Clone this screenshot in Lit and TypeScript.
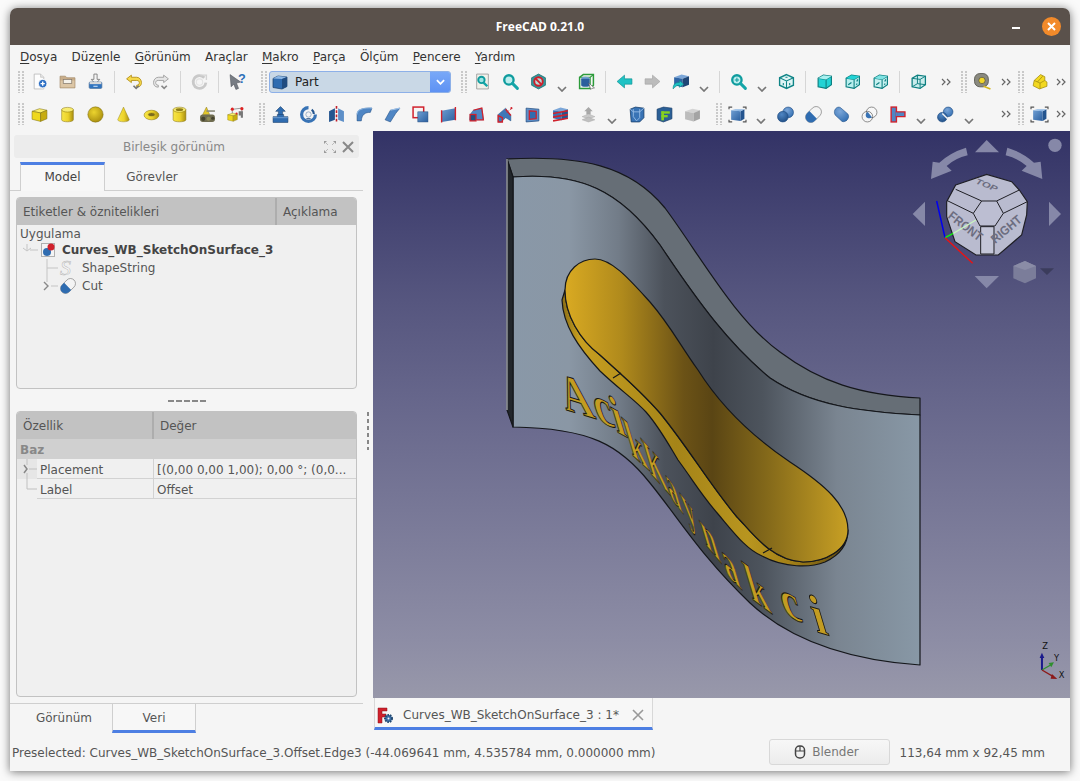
import { LitElement, html, css, svg } from 'lit';
import { customElement } from 'lit/decorators.js';

const PLUS = svg`<circle cx="11" cy="10" r="4" fill="#2d6fc4" stroke="#fff" stroke-width=".8"/><path d="M9 10h4M11 8v4" stroke="#fff" stroke-width="1.3"/>`;

const cube = (t: string, f: string, s: string, e = 'none') => svg`
  <path d="M1 5 8 2.5 15 4 9 6.5Z" fill=${t} stroke=${e} stroke-width=".7"/>
  <path d="M1 5 9 6.5V14.5L1 12.5Z" fill=${f} stroke=${e} stroke-width=".7"/>
  <path d="M9 6.5 15 4V12L9 14.5Z" fill=${s} stroke=${e} stroke-width=".7"/>`;

const YELLOW = svg`
  <path d="M1 5 8 2.5 15 4 9 6.5Z" fill="#fbef6a" stroke="#7d6d10" stroke-width=".5"/>
  <path d="M1 5 9 6.5V14.5L1 12.5Z" fill="#efd81c" stroke="#7d6d10" stroke-width=".5"/>
  <path d="M9 6.5 15 4V12L9 14.5Z" fill="#c7ac10" stroke="#7d6d10" stroke-width=".5"/>`;

const teal = (front: string, top: string, marks = false) => svg`
  <path d="M2 5 7 2 14.5 3 14.5 11 9.5 14.5 2 13Z" fill=${front} stroke="#0d7f80" stroke-width="1.1"/>
  <path d="M2 5 9.5 6 14.5 3M9.5 6V14.5" fill="none" stroke="#0d7f80" stroke-width="1"/>
  <path d="M2 5 7 2 14.5 3 9.5 6Z" fill=${top}/>
  ${marks ? svg`<path d="M4 11 7 9M12 8l1-2M11.5 11l1-1" stroke="#0d7f80" stroke-width="1.1"/>` : ''}`;

const lens = svg`
  <circle cx="6.5" cy="6.5" r="4.4" fill="#bdeeee" stroke="#0f9c9e" stroke-width="2.2"/>
  <path d="M9.8 9.8 14.5 14.5" stroke="#14a5a8" stroke-width="2.8" stroke-linecap="round"/>`;

const ball = (x: number, y: number, r: number, fill = 'url(#gball)', e = '#1f4d85') =>
  svg`<circle cx=${x} cy=${y} r=${r} fill=${fill} stroke=${e} stroke-width=".6"/>`;

const ICONS: Record<string, unknown> = {
  new: svg`<path d="M3 1h6l3 3v11H3Z" fill="#fdfdfd" stroke="#bbb" stroke-width=".8"/><path d="M9 1v3h3" fill="#e4e4e4" stroke="#bbb" stroke-width=".6"/>${PLUS}`,
  open: svg`<path d="M1 3h5l1.5 1.5H15V14H1Z" fill="#c8ad8a" stroke="#a68d6c" stroke-width=".7"/><path d="M1.5 7H14.5V13.5H1.5Z" fill="#dcc6a6"/><rect x="4" y="6" width="8" height="4" fill="#f4f1ea" stroke="#84796a" stroke-width=".7"/>`,
  save: svg`<path d="M6.5 1h3v5h2.5L8 10.5 4 6h2.5Z" fill="#f4f4f4" stroke="#777" stroke-width=".8"/><rect x="2" y="8.5" width="12" height="6" rx="1" fill="#2f74c0" stroke="#4a6d95" stroke-width=".6"/><rect x="2.5" y="8.5" width="11" height="2" fill="#d9d9d9"/><path d="M6 12.5h4" stroke="#cfe2f7" stroke-width="1"/>`,
  undo: svg`<path d="M6 2 1.5 5.5 6 9V7h5c1.8 0 2.5 1 2.5 2S13 11.5 11 11.5v1.8c3.500 0 4.500-2.300 4.500-4.300S14 4 11 4H6Z" fill="#f6d94a" stroke="#b18b10" stroke-width=".8"/><path d="M8 12l2.500 2.500L13 12" fill="none" stroke="#777" stroke-width="1.600"/>`,
  redo: svg`<path d="M10 2 14.500 5.500 10 9V7H5c-1.800 0-2.500 1-2.500 2S3 11.500 5 11.500v1.800C1.500 13.300.5 11 .5 9S2 4 5 4h5Z" fill="#e6e6e6" stroke="#9b9b9b" stroke-width=".8"/><path d="M8 12l2.500 2.500L13 12" fill="none" stroke="#888" stroke-width="1.600"/>`,
  refresh: svg`<path d="M12.500 4.500A6 6 0 1 0 14 9" fill="none" stroke="#c9c9c9" stroke-width="2.600"/><path d="M9 2h5.500v4.500" fill="none" stroke="#d4d4d4" stroke-width="1.300"/><circle cx="8" cy="8.500" r="3" fill="none" stroke="#e3e3e3"/>`,
  whats: svg`<path d="M1 1.500 11 8.500 7 9.500 9 14.500 6.500 15.500 4.500 10.500 2 13Z" fill="#777c84" stroke="#4c5056" stroke-width=".5"/><text x="8.500" y="9" font-family="Liberation Sans" font-weight="700" font-size="12" fill="#2c6fb8">?</text>`,
  part: svg`<path d="M1 4.500 6 2 15 3V12.500L10 15 1 13.500Z" fill="#2f6cb0" stroke="#183c66" stroke-width=".7"/><path d="M1 4.500 6 2 15 3 10 5Z" fill="#8db7e4"/><path d="M10 5 15 3V12.500L10 15Z" fill="#204c80"/>`,
  fit: svg`<path d="M2.500 1h11v14h-11Z" fill="#f1f1ea" stroke="#999" stroke-width=".8"/><circle cx="7" cy="6.500" r="3" fill="#9fe4e3" stroke="#0f9c9e" stroke-width="1.800"/><path d="M9 9l3.500 3.500" stroke="#14a5a8" stroke-width="2.200"/>`,
  zoomsel: lens,
  nodraw: svg`<path d="M8 1 14.500 4.500V11.500L8 15 1.500 11.500V4.500Z" fill="#34989c" stroke="#14686b" stroke-width=".7"/><circle cx="8" cy="8" r="4" fill="#b4d8d6" stroke="#cf1f2b" stroke-width="1.800"/><path d="M5.300 5.300 10.700 10.700" stroke="#cf1f2b" stroke-width="1.800"/>`,
  boxsel: svg`<path d="M1.500 4 5 1.500H14.500V11.500L11.500 14.500H1.500Z" fill="none" stroke="#2c9b3a" stroke-width="1.400"/><path d="M1.500 4H11.500V14.500M11.500 4 14.500 1.500" fill="none" stroke="#2c9b3a" stroke-width="1"/><ellipse cx="7" cy="5.500" rx="4" ry="2" fill="#6f9fd3"/><path d="M3 5.500V11.500C3 13.500 11 13.500 11 11.500V5.500" fill="#2c5f9d"/><path d="M10 9.500 15.500 14 13 14.500 12 15.500Z" fill="#fff" stroke="#555" stroke-width=".6"/>`,
  back: svg`<path d="M1 8 8 2V5.500H15V10.500H8V14Z" fill="#1ec2c4" stroke="#0f8f90" stroke-width=".6"/>`,
  fwd: svg`<path d="M15 8 8 2V5.500H1V10.500H8V14Z" fill="#bcbcbc" stroke="#a4a4a4" stroke-width=".6"/>`,
  sync: svg`<g transform="translate(1 -1)">${cube('#7ba6d8', '#2f65a6', '#1f4676')}</g><path d="M1 15C1 10.500 3 9 7 9V7L11 10.500 7 13.500V11.500C4.500 11.500 3.500 12.500 1 15Z" fill="#1ec2c4" stroke="#0f7f80" stroke-width=".5"/>`,
  zoom: svg`${lens}<path d="M4.500 6.500h4M6.500 4.500v4" stroke="#0f9c9e" stroke-width="1"/>`,
  iso: svg`<path d="M8 1.500 14.500 4.500V11.500L8 14.500 1.500 11.500V4.500Z" fill="#dff5f5" stroke="#0f8486" stroke-width="1.300"/><path d="M1.500 4.500 8 7.500 14.500 4.500M8 7.500V14.500" fill="none" stroke="#0f8486"/><path d="M5 9.500v2M11 9.500v2M7 4h2" stroke="#0f8486" stroke-width="1"/>`,
  vfront: teal('#22d3d5', '#a9f0f0'),
  vtop: teal('#b8efee', '#22d3d5', true),
  vright: teal('#c5f1f0', '#7fe3e3', true),
  vwire: svg`<path d="M2 5 7 2 14.500 3V11L9.500 14.500 2 13Z" fill="#9fe3e3" fill-opacity=".5" stroke="#0d7f80" stroke-width="1.200"/><path d="M2 5 9.500 6 14.500 3M9.500 6V14.500M7 2V10L2 13M7 10 14.500 11" fill="none" stroke="#0d7f80" stroke-width=".9"/>`,
  measure: svg`<rect x=".5" y=".5" width="13" height="12.500" rx="5" fill="#8a8a80" stroke="#55554d" stroke-width=".8"/><circle cx="7.500" cy="7" r="3" fill="#f2d62a" stroke="#444" stroke-width=".6"/><path d="M9 12.500 15.500 15" stroke="#d6b81c" stroke-width="1.600"/>`,
  yshape: svg`<path d="M3 7 9 1.500 13 3.500V7L15 8.500V12.500L8 15 2 12Z" fill="#f2d820" stroke="#a08a10" stroke-width=".7"/><path d="M3 7 8.500 9.500V15M8.500 9.500 13 7M6 8.500 11 3" fill="none" stroke="#a08a10" stroke-width=".7"/>`,
  box: YELLOW,
  cyl: svg`<path d="M2.500 3.500V13C2.500 15.500 13.500 15.500 13.500 13V3.500Z" fill="url(#gyel)" stroke="#8a7610" stroke-width=".5"/><ellipse cx="8" cy="3.500" rx="5.500" ry="2.200" fill="#f8ec70" stroke="#8a7610" stroke-width=".5"/>`,
  sphere: svg`<circle cx="8" cy="8" r="7.200" fill="url(#gsph)" stroke="#7d6b10" stroke-width=".5"/>`,
  cone: svg`<path d="M8 1 13.500 13C13 15.500 3 15.500 2.500 13Z" fill="url(#gyel)" stroke="#8a7610" stroke-width=".4"/>`,
  torus: svg`<ellipse cx="8" cy="8.500" rx="7" ry="4.500" fill="url(#gyel)" stroke="#8a7610" stroke-width=".5"/><ellipse cx="8" cy="8" rx="3" ry="1.500" fill="#7a6a20" stroke="#8a7610" stroke-width=".4"/>`,
  tube: svg`<path d="M2 3.500V13C2 15.500 14 15.500 14 13V3.500Z" fill="url(#gyel)" stroke="#8a7610" stroke-width=".5"/><ellipse cx="8" cy="3.500" rx="6" ry="2.400" fill="#f8ec70" stroke="#8a7610" stroke-width=".5"/><ellipse cx="8" cy="3.500" rx="3.500" ry="1.300" fill="#8f7d18"/>`,
  shapes: svg`<path d="M3 9 7 1 10 8Z" fill="#e2c62a" stroke="#7d6b10" stroke-width=".4"/><rect x="7" y="4" width="8" height="1.500" fill="#8a8a7a"/><rect x="1" y="8" width="14" height="7" rx="2.500" fill="#6f6c50"/><circle cx="4" cy="12" r="2" fill="#45432e"/><circle cx="9" cy="12" r="2" fill="#8c8954"/><circle cx="13" cy="11.500" r="1.500" fill="#45432e"/>`,
  prims: svg`<g transform="translate(0 5) scale(.65)">${YELLOW}</g><path d="M6 3 14 2M5 4v3M14 3v5" stroke="#888" stroke-width=".8"/><circle cx="5" cy="3" r="1.500" fill="#d22"/><circle cx="14" cy="2.500" r="1.500" fill="#d22"/><path d="M11 5h4v6h-2v-2h-2Z" fill="#777"/><circle cx="9" cy="7" r="1" fill="#d22"/>`,
  extrude: svg`<path d="M8 .5 12.500 5H10V9H6V5H3.500Z" fill="#2f6cb0" stroke="#163b66" stroke-width=".5"/><path d="M1 10H5V8H11V10H15V15.500H1Z" fill="#2f6cb0" stroke="#163b66" stroke-width=".5"/><path d="M1 11H15" fill="none" stroke="#7ba6d8" stroke-width=".8"/>`,
  revolve: svg`<path d="M8 1.500A6.500 6.500 0 1 0 14.500 8" fill="none" stroke="#3873b5" stroke-width="3"/><path d="M11 3.500A5 5 0 0 1 13 7.500" fill="none" stroke="#24558f" stroke-width="2"/><circle cx="8" cy="8" r="2.500" fill="#f4f4f4" stroke="#6f8fb0" stroke-width=".6"/><path d="M6 12h4" stroke="#234f80" stroke-width="1"/>`,
  mirror: svg`<path d="M1 5 6.500 2V13L1 15Z" fill="#24558f"/><path d="M15 5 9.500 2V13L15 15Z" fill="#5d8fc8"/><path d="M8 0V16" stroke="#c21f2b" stroke-width="1.500" stroke-dasharray="2.500 1.500"/>`,
  fillet: svg`<path d="M1 14V8C1 4 5 1.500 15 2L13.500 6C9 6 5.500 7.500 5 14Z" fill="#4f86c4" stroke="#204c80" stroke-width=".5"/><path d="M1 8C1 4 5 1.500 15 2" fill="none" stroke="#8db7e4" stroke-width="1"/>`,
  chamfer: svg`<path d="M1 13 6 4 15 2 11 7 6 15Z" fill="#4f86c4" stroke="#204c80" stroke-width=".5"/><path d="M6 4 15 2" stroke="#9cc0e8" stroke-width="1"/>`,
  makeface: svg`<rect x="1" y="1" width="10" height="10" fill="none" stroke="#d0212c" stroke-width="1.400"/><rect x="5.500" y="5.500" width="9.500" height="9.500" fill="url(#gblue)" stroke="#204c80" stroke-width=".5"/>`,
  ruled: svg`<path d="M1.500 4.500 14.500 2V13L1.500 15Z" fill="url(#gblue)"/><path d="M1.500 4V15.500M14.500 1V13.500" stroke="#d0212c" stroke-width="1.300"/>`,
  loft: svg`<path d="M5 4 13 2 14.500 13H1.500L2 8Z" fill="#4f86c4" stroke="#204c80" stroke-width=".4"/><rect x="2" y="8" width="5.500" height="6" fill="#234f80" stroke="#d0212c" stroke-width="1.200"/><path d="M5 4 13 2 14.500 13H8" fill="none" stroke="#d0212c" stroke-width="1.200"/>`,
  sweep: svg`<path d="M2 8 9 2 14 9 14 14 9 11 5 15H2Z" fill="#3f78b8" stroke="#204c80" stroke-width=".4"/><path d="M2 9V15H6V11ZM9 3 14 9" fill="none" stroke="#d0212c" stroke-width="1.300"/><circle cx="14.500" cy="2" r="1" fill="#d0212c"/><path d="M10 6l4-3" stroke="#d0212c" stroke-width=".8" stroke-dasharray="1 1"/>`,
  offset: svg`<path d="M2 2 14 3V14L2 15Z" fill="#5d8fc8" stroke="#204c80" stroke-width=".7"/><path d="M5 4.500 11.500 5V12L5 12.500Z" fill="#2f6cb0" stroke="#d0212c" stroke-width="1.200"/>`,
  section: svg`<g transform="translate(0 -1)">${cube('#7ba6d8', '#3873b5', '#24558f')}</g><path d="M1 7 15 4.500M1 10.500 15 8M1 14 15 11.500" stroke="#d0212c" stroke-width="1.500"/>`,
  compound: svg`<path d="M8 1 12 5H4ZM6 5h4v3H6Z" fill="#a8a8a8"/><path d="M2 10 8 7.500 14 10 8 12Z" fill="#c9c9c9" stroke="#a0a0a0" stroke-width=".4"/><path d="M2 13 8 10.500 14 13 8 15Z" fill="#c0c0c0" stroke="#a0a0a0" stroke-width=".4"/>`,
  shell: svg`<path d="M2 3 7 1 15 2V11L11 15H3Z" fill="#3873b5" stroke="#163b66" stroke-width=".7"/><path d="M5 3V10L8 14 11 11V3M2 3 5 5.500H11L15 2" fill="none" stroke="#9cc0e8" stroke-width=".8"/>`,
  faceF: svg`<path d="M1 3 7 1 15 2V12L7 15 1 13Z" fill="#2b5f96" stroke="#163b66" stroke-width=".6"/><rect x="5" y="5" width="2.500" height="8.500" fill="#86d21f"/><rect x="5" y="5" width="8" height="2.200" fill="#86d21f"/><rect x="5" y="8.500" width="6" height="2.200" fill="#86d21f"/>`,
  solid: cube('#d4d4d4', '#bcbcbc', '#a4a4a4'),
  bbox: svg`<path d="M2 4 11 5V14L2 13Z" fill="url(#gblue)"/><path d="M11 5 14.500 3V12L11 14Z" fill="#24558f"/><path d="M2 4 6 3 14.500 3 11 5Z" fill="#8db7e4"/><path d="M0 3V1H3M13 1h3V3M0 13v2H3M13 15h3V13" fill="none" stroke="#555" stroke-width="1.100"/>`,
  bool: svg`${ball(10.500, 6, 5, 'url(#gball2)')}${ball(5.500, 10, 5)}`,
  cut: svg`<g transform="rotate(-45 8 8)"><rect x="-.5" y="3" width="17" height="10" rx="5" fill="#f4f4f4" stroke="#777" stroke-width=".6"/><path d="M4.500 3A5 5 0 0 0 4.500 13H7.500V3Z" fill="#2f6cb0"/></g>`,
  union: svg`<path d="M7 1.500 14 7.500C16.500 11 12 16 8.500 14.500L2 8.500C-.5 4 4 -.5 7 1.500Z" fill="url(#gball2)" stroke="#1f4d85" stroke-width=".5"/>`,
  common: svg`${ball(10, 6, 5, '#f7f7f7', '#555')}${ball(6, 10, 5, 'none', '#555')}<path d="M6 5.500 10.500 10.500C9 12 6.500 12 5 10.500 4 8.500 4.500 7 6 5.500Z" fill="#3873b5" transform="rotate(4 8 8)"/>`,
  join: svg`<rect x="2" y="1" width="5" height="14" fill="#4f86c4" stroke="#d0212c" stroke-width="1.300"/><path d="M7 5.500H15V10H7Z" fill="#4f86c4" stroke="#d0212c" stroke-width="1.300"/><path d="M7 6V9.500" stroke="#4f86c4" stroke-width="1.600"/>`,
  split: svg`${ball(10.500, 5.500, 4.500, 'url(#gball2)')}${ball(5, 10.500, 4.500)}<path d="M5 7 10 12" stroke="#f5f5f5" stroke-width="1.300"/>`,
};

const R1 = ['grip', 'new', 'open', 'save', 'sep', 'undo', 'redo', 'sep', 'refresh', 'sep', 'whats', 'grip gl', 'combo', 'grip gl',
  'fit', 'zoomsel', 'nodraw', 'chev', 'boxsel', 'sep', 'back', 'fwd', 'sync', 'chev', 'sep', 'zoom', 'chev', 'iso', 'sep',
  'vfront', 'vtop', 'vright', 'sep', 'vwire', 'more wide', 'grip', 'measure', 'more', 'grip', 'yshape', 'more end'];
const R2 = ['grip', 'box', 'cyl', 'sphere', 'cone', 'torus', 'tube', 'shapes', 'prims', 'grip gl',
  'extrude', 'revolve', 'mirror', 'fillet', 'chamfer', 'makeface', 'ruled', 'loft', 'sweep', 'offset', 'section', 'compound', 'chev',
  'shell', 'faceF', 'solid', 'grip gl', 'bbox', 'chev', 'bool', 'cut', 'union', 'common', 'join', 'chev', 'split', 'chev', 'gap', 'more', 'grip', 'bbox', 'more end'];

const MENUS: [string, string, string][] = [
  ['', 'D', 'osya'], ['Düz', 'e', 'nle'], ['', 'G', 'örünüm'], ['Araçlar', '', ''], ['', 'M', 'akro'],
  ['', 'P', 'arça'], ['Ölçüm', '', ''], ['', 'P', 'encere'], ['', 'Y', 'ardım'],
];

// letter, x, y, baseline slope, horizontal squeeze
const LETTERS: [string, number, number, number, number][] = [
  ['A', 566, 410, .3, .76], ['c', 598, 421, .42, .76], ['i', 617, 432, .55, .72], ['k', 632, 455, .9, .58],
  ['K', 651, 474, 1.1, .46], ['a', 671, 498, 1.3, .46], ['y', 687, 518, 1.3, .46], ['n', 706, 545, 1.2, .52],
  ['a', 727, 575, 1, .56], ['k', 752, 599, .75, .66], ['c', 785, 615, .45, .78], ['i', 817, 632, .3, .82],
];

@customElement('app-root')
export class AppRoot extends LitElement {
  static styles = css`
    :host {
      display: block;
      width: 1080px;
      height: 781px;
      box-sizing: border-box;
      padding: 8px 10px 10px;
      background: #fafafa;
      font-family: "DejaVu Sans", sans-serif;
      font-size: 12px;
      color: #333;
      overflow: hidden;
    }
    .defs { display: block; width: 0; height: 0; }
    .window {
      height: 763px;
      display: flex;
      flex-direction: column;
      background: #f5f5f5;
      border-radius: 7px 7px 0 0;
      box-shadow: 0 1px 10px rgba(0, 0, 0, .55);
    }
    .title {
      height: 37px;
      flex: none;
      display: flex;
      align-items: center;
      background: #5a514b;
      border-radius: 7px 7px 0 0;
      color: #fff;
      font: 700 12px "Open Sans", sans-serif;
      padding-right: 9px;
    }
    .title-text { flex: 1; text-align: center; padding-left: 58px; }
    .minimize { width: 8px; height: 2px; background: #fff; margin: 3px 22px 0 0; }
    .close {
      width: 19px;
      height: 19px;
      border-radius: 50%;
      background: #f28a2a;
      display: flex;
      align-items: center;
      justify-content: center;
    }
    .menu { height: 23px; flex: none; display: flex; align-items: center; padding-left: 10px; gap: 14.25px; color: #333; }
    .menu u { text-underline-offset: 2px; }
    .bars { height: 63px; flex: none; }
    .bar { display: flex; align-items: center; padding-left: 6px; }
    .bar.r1 { height: 27px; }
    .bar.r2 { height: 28px; margin-top: 5px; }
    .btn { width: 28px; height: 22px; flex: none; display: flex; align-items: center; justify-content: center; }
    .btn svg { width: 17px; height: 17px; display: block; overflow: visible; }
    .grip {
      width: 9px;
      height: 22px;
      flex: none;
      background-image: repeating-linear-gradient(#c9c9c9 0 2px, transparent 2px 3px), repeating-linear-gradient(#c9c9c9 0 2px, transparent 2px 3px);
      background-size: 2px 100%;
      background-position: 2px 0, 6px 0;
      background-repeat: no-repeat;
    }
    .grip.gl { margin-left: 8px; }
    .sep { width: 10px; height: 22px; flex: none; display: flex; justify-content: center; }
    .sep::after { content: ""; width: 1px; background: #d6d6d6; }
    .chev { width: 20px; flex: none; height: 22px; display: flex; justify-content: center; align-items: flex-end; }
    .chev svg { width: 10px; height: 6px; margin-bottom: 1px; }
    .more { width: 20px; flex: none; display: flex; justify-content: center; }
    .more.wide { width: 27px; }
    .more.end { width: 15px; }
    .more svg { width: 10px; height: 8px; }
    .gap { width: 17px; flex: none; }
    .combo {
      width: 182px;
      height: 22px;
      margin-left: 1px;
      box-sizing: border-box;
      flex: none;
      display: flex;
      align-items: center;
      background: #c9d8e6;
      border: 1px solid #8db0e8;
      border-radius: 3px;
      font-size: 12px;
      color: #222;
      overflow: hidden;
    }
    .combo svg { width: 16px; height: 16px; margin: 0 7px 0 2px; }
    .combo span { flex: 1; }
    .combo .drop {
      width: 20px;
      height: 100%;
      background: linear-gradient(#78a8f8, #5e92f3);
      display: flex;
      align-items: center;
      justify-content: center;
    }
    .combo .drop svg { width: 9px; height: 6px; margin: 0; }
    .main { flex: 1; display: flex; min-height: 0; }
    .left { width: 363px; flex: none; display: flex; }
    .leftcol { width: 353px; flex: none; display: flex; flex-direction: column; }
    .vsplit { width: 10px; flex: none; padding-top: 281px; box-sizing: border-box; }
    .vsplit div {
      width: 2px;
      height: 38px;
      margin-left: 4px;
      background: repeating-linear-gradient(#888 0 4px, transparent 4px 7px);
    }
    .dock-title {
      height: 23px;
      margin: 4px 4px 0;
      flex: none;
      display: flex;
      align-items: center;
      background: #ececec;
      border-radius: 3px;
      color: #888;
      font-size: 12px;
      padding-right: 4px;
    }
    .dock-title span { flex: 1; text-align: center; padding-left: 15px; }
    .dock-title svg { width: 14px; height: 14px; margin-left: 4px; }
    .tabs-top { height: 28px; margin-top: 4px; flex: none; display: flex; padding-left: 10px; border-bottom: 1px solid #cfcfcf; }
    .tab { display: flex; align-items: center; justify-content: center; color: #555; box-sizing: border-box; }
    .tabs-top .tab { width: 85px; }
    .tabs-top .tab.on {
      background: #f7f7f7;
      border-top: 3px solid #4d7fe3;
      border-left: 1px solid #cfcfcf;
      border-right: 1px solid #cfcfcf;
      margin-bottom: -1px;
      color: #444;
      padding-bottom: 2px;
    }
    .tabs-top .tab.off { width: 94px; padding-top: 2px; }
    .panel {
      margin: 0 6px;
      border: 1px solid #c2c2c2;
      border-radius: 4px;
      background: #f0f0f0;
      overflow: hidden;
      flex: none;
    }
    .tree { margin-top: 6px; height: 192px; box-sizing: border-box; }
    .head { height: 27px; display: flex; align-items: center; background: #c2c2c2; color: #555; }
    .head div { height: 100%; display: flex; align-items: center; box-sizing: border-box; padding-left: 6px; }
    .tree .head div:first-child { width: 260px; border-right: 2px solid #adadad; }
    .props .head div:first-child { width: 137px; border-right: 2px solid #adadad; }
    .row { height: 18px; display: flex; align-items: center; color: #555; padding-left: 3px; white-space: nowrap; box-sizing: border-box; }
    .row svg.ico { width: 16px; height: 16px; margin-right: 6px; flex: none; overflow: visible; }
    .row.first { height: 16px; padding-top: 2px; }
    .row b { color: #444; }
    .tree-line { flex: none; }
    .hsplit { height: 22px; flex: none; display: flex; align-items: center; justify-content: center; }
    .hsplit div { width: 38px; height: 2px; background: repeating-linear-gradient(90deg, #888 0 6px, transparent 6px 8px); margin-top: 1px; }
    .props { height: 286px; box-sizing: border-box; }
    .group { height: 20px; box-sizing: border-box; padding: 1px 0 0 3px; display: flex; align-items: center; background: #d0d0d0; color: #888; font-weight: 700; }
    .prow { height: 20px; display: flex; color: #555; }
    .prow .gut { width: 20px; flex: none; background: #e6e6e6; }
    .prow .gut.none { background: none; }
    .prow .gut svg { display: block; width: 20px; height: 20px; }
    .prow .name, .prow .val { display: flex; align-items: center; border-bottom: 1px solid #d2d2d2; box-sizing: border-box; white-space: nowrap; overflow: hidden; padding: 2px 0 0 3px; }
    .prow .name { width: 117px; flex: none; border-right: 1px solid #d2d2d2; }
    .prow .val { flex: 1; }
    .tabs-bot { height: 29px; margin-top: 6px; flex: none; display: flex; border-top: 1px solid #cfcfcf; }
    .tabs-bot .tab:first-child { width: 102px; padding: 0 0 2px 6px; }
    .tabs-bot .tab.on {
      width: 84px;
      border-left: 1px solid #cfcfcf;
      border-right: 1px solid #cfcfcf;
      border-bottom: 3px solid #4d7fe3;
      background: #f7f7f7;
      margin-top: -1px;
      border-top: 1px solid #cfcfcf;
      padding-top: 2px;
    }
    .viewcol { flex: 1; display: flex; flex-direction: column; min-width: 0; }
    .view { display: block; width: 697px; height: 567px; flex: none; }
    .doctabs { flex: 1; display: flex; padding-left: 1px; }
    .doctab {
      width: 279px;
      box-sizing: border-box;
      display: flex;
      align-items: center;
      background: #f7f7f7;
      border-left: 1px solid #d8d8d8;
      border-right: 1px solid #d8d8d8;
      border-bottom: 3px solid #4d7fe3;
      padding: 5px 0 0 2px;
      color: #555;
    }
    .doctab svg.f { width: 17px; height: 17px; flex: none; margin-right: 9px; }
    .doctab span { flex: 1; }
    .doctab svg.x { width: 12px; height: 12px; margin-right: 8px; }
    .status { height: 39px; flex: none; display: flex; align-items: center; padding: 2px 25px 0 2px; color: #555; }
    .status .msg { flex: 1; white-space: nowrap; padding-top: 2px; }
    .status .dims { padding-top: 2px; }
    .nav {
      width: 121px;
      height: 26px;
      box-sizing: border-box;
      margin-right: 10px;
      display: flex;
      align-items: center;
      justify-content: center;
      gap: 6px;
      border: 1px solid #d8d8d8;
      border-radius: 3px;
      background: linear-gradient(#f7f7f7, #ececec);
      color: #777;
      padding: 1px 5px 0 0;
    }
    .nav svg { width: 12px; height: 14px; }
  `;

  private renderItem(item: string) {
    const [kind] = item.split(' ');
    if (kind === 'grip') return html`<div class=${item}></div>`;
    if (kind === 'sep') return html`<div class="sep"></div>`;
    if (kind === 'gap') return html`<div class="gap"></div>`;
    if (kind === 'chev') return html`<div class="chev"><svg viewBox="0 0 10 6"><path d="M1 1 5 5 9 1" fill="none" stroke="#777" stroke-width="1.700"/></svg></div>`;
    if (kind === 'more') return html`<div class=${item}><svg viewBox="0 0 10 8"><path d="M1 1 4 4 1 7M6 1 9 4 6 7" fill="none" stroke="#666" stroke-width="1.200"/></svg></div>`;
    if (kind === 'combo') {
      return html`<div class="combo"><svg viewBox="0 0 16 16">${ICONS.part}</svg><span>Part</span>
        <div class="drop"><svg viewBox="0 0 10 6"><path d="M1 1 5 5 9 1" fill="none" stroke="#fff" stroke-width="2"/></svg></div></div>`;
    }
    return html`<div class="btn"><svg viewBox="0 0 16 16">${ICONS[item]}</svg></div>`;
  }

  private renderCube() {
    const arrow = '#8688a8';
    return svg`<g transform="translate(890 130) scale(.3333)">
      <g fill=${arrow}>
        <path d="M290 30 255 67H327Z"/><path d="M68 252 105 215V288Z"/><path d="M513 252 477 215V288Z"/><path d="M290 475 254 438H327Z"/>
        <path d="M228 53 233 76Q195 85 170 108L185 122 123 147 128 95 148 98Q180 68 228 53Z"/>
        <path d="M352 53 347 76Q385 85 410 108L395 122 457 147 452 95 432 98Q400 68 352 53Z"/>
        <circle cx="495" cy="46" r="20"/>
      </g>
      <path d="M197 165 290 133 365 155 388 180 412 215 410 255 395 315 325 375H258L195 335 170 260V215Z" fill="#b9bbcf" stroke="#1e1e24" stroke-width="3.500"/>
      <g fill="none" stroke="#1e1e24" stroke-width="3">
        <path d="M275 213H320L340 250 315 288H270L250 250Z" fill="#bcbed2"/>
        <path d="M197 178 275 213M388 180 320 213M172 212 250 250M412 215 340 250"/>
      </g>
      <path d="M272 290H312V372H272Z" fill="#c4c6d8" stroke="#1e1e24" stroke-width="3"/>
      <g font-family="Liberation Sans" fill="#6c6d80" font-weight="700">
        <text transform="translate(255 160) rotate(22) scale(1.05 .75)" font-size="32" font-style="italic">TOP</text>
        <text transform="translate(172 262) rotate(38) scale(1.15 1.25)" font-size="30">FRONT</text>
        <text transform="translate(316 342) rotate(-40) scale(1.15 1.25)" font-size="30">RIGHT</text>
      </g>
      <path d="M140 213 165 323" stroke="#0000f0" stroke-width="4.500"/>
      <path d="M165 323 190 310" stroke="#10f010" stroke-width="4.500"/>
      <path d="M190 310 258 270" stroke="#c8f4c0" stroke-width="4"/>
      <path d="M165 323 248 400" stroke="#f01010" stroke-width="4"/>
      <path d="M405 393 438 408V445L405 460 370 445V408Z" fill="#7b7d9a"/>
      <path d="M370 408 405 420 438 408 405 393Z" fill="#8a8ca6"/>
      <path d="M450 415H492L471 435Z" fill="#3b3c5c"/>
    </g>`;
  }

  private renderModel() {
    const outer = 'M507 159C580 155 630 165 665 208C700 255 735 320 780 352C820 382 860 395 920 398';
    const lower = 'M513 177C580 172 620 190 660 245C700 305 730 345 770 378C810 405 860 412 920 415';
    const top = 'M565 290C565 270 580 259 595 259C612 259 630 280 650 302C670 325 680 345 698 370C720 405 750 435 790 462C825 485 848 505 848 530C848 550 825 562 803 562C770 560 750 530 737 517C710 485 690 450 660 413C640 390 622 375 600 355C580 340 565 315 565 290Z';
    const rim = 'M565 290L562 300C563 325 578 347 600 371C620 390 635 400 646 412C660 428 670 447 678 460C695 483 700 493 718 514C735 534 746 549 762 556C785 568 810 568 825 562C840 555 848 545 848 530C848 550 825 562 803 562C770 560 750 530 737 517C710 485 690 450 660 413C640 390 622 375 600 355C580 340 565 315 565 290Z';
    return svg`<g stroke="#15171b" stroke-width="1.200" stroke-linejoin="round">
      <path d="${outer}L920 415C860 412 810 405 770 378C730 345 700 305 660 245C620 190 580 172 513 177Z" fill="#666e76"/>
      <path d="${lower}L920 665C850 660 790 640 750 603C700 555 680 520 650 483C620 445 590 428 513 427Z" fill="url(#gwall)"/>
      <path d="M507 159 513 177V427L507 410Z" fill="#22262b"/>
      <path d="M507 159V410" stroke="#d0d4d8" stroke-width="1"/>
      <path d=${rim} fill="url(#grim)"/>
      <path d=${top} fill="url(#ggold)"/>
      <path d="M613 378 621 373M763 553 772 548" fill="none"/>
    </g>
    <g font-family="Liberation Serif" font-weight="700" font-size="56" fill="#c39c22" stroke="#1a1812" stroke-width="1.100">
      ${LETTERS.map(([c, x, y, slope, sx]) => svg`<text transform="matrix(${sx} ${slope * sx} .3 1 ${x} ${y})">${c}</text>`)}
    </g>`;
  }

  private renderTriad() {
    return svg`<g transform="translate(680 630) scale(.3333)">
      <path d="M1086 120V80" stroke="#1a1a8c" stroke-width="6"/><path d="M1079 84 1086 68 1093 84Z" fill="#1a1a8c"/>
      <path d="M1086 120 1112 105" stroke="#2f8f2f" stroke-width="4"/><path d="M1106 99 1122 97 1114 112Z" fill="#2f8f2f"/>
      <path d="M1086 120 1120 140" stroke="#8c1a1a" stroke-width="4"/><path d="M1116 132 1132 147 1112 146Z" fill="#8c1a1a"/>
      <g font-family="DejaVu Sans" font-size="25" fill="#111">
        <text x="1087" y="58">Z</text><text x="1122" y="94">Y</text><text x="1136" y="143">X</text>
      </g>
    </g>`;
  }

  render() {
    return html`
      <svg class="defs">
        <defs>
          <linearGradient id="gyel"><stop offset="0" stop-color="#f7e548"/><stop offset=".55" stop-color="#ecd22a"/><stop offset="1" stop-color="#a98f10"/></linearGradient>
          <radialGradient id="gsph" cx=".4" cy=".35" r=".7"><stop offset="0" stop-color="#ecd42e"/><stop offset="1" stop-color="#a88d0e"/></radialGradient>
          <linearGradient id="gblue" x2="1" y2="1"><stop offset="0" stop-color="#6f9ed2"/><stop offset="1" stop-color="#2a5f9f"/></linearGradient>
          <radialGradient id="gball" cx=".4" cy=".3" r=".8"><stop offset="0" stop-color="#4f86c4"/><stop offset="1" stop-color="#1d4a80"/></radialGradient>
          <radialGradient id="gball2" cx=".4" cy=".3" r=".8"><stop offset="0" stop-color="#7ba6d8"/><stop offset="1" stop-color="#2f6cb0"/></radialGradient>
        </defs>
      </svg>
      <div class="window">
        <div class="title">
          <div class="title-text">FreeCAD 0.21.0</div>
          <div class="minimize"></div>
          <div class="close"><svg width="9" height="9" viewBox="0 0 9 9"><path d="M1 1 8 8M8 1 1 8" stroke="#fff" stroke-width="2"/></svg></div>
        </div>
        <div class="menu">
          ${MENUS.map(([a, u, b]) => html`<span>${a}<u>${u}</u>${b}</span>`)}
        </div>
        <div class="bars">
          <div class="bar r1">${R1.map(i => this.renderItem(i))}</div>
          <div class="bar r2">${R2.map(i => this.renderItem(i))}</div>
        </div>
        <div class="main">
          <div class="left">
            <div class="leftcol">
              <div class="dock-title"><span>Birleşik görünüm</span>
                <svg viewBox="0 0 14 14"><path d="M1 4V1H4L1 4M10 1H13V4ZM1 10V13H4ZM13 10V13H10Z" fill="#9a9a9a"/><path d="M3 3 5 5M11 3 9 5M3 11 5 9M11 11 9 9" stroke="#bbb"/></svg>
                <svg viewBox="0 0 14 14"><path d="M2 2 12 12M12 2 2 12" stroke="#888" stroke-width="2"/></svg>
              </div>
              <div class="tabs-top">
                <div class="tab on">Model</div>
                <div class="tab off">Görevler</div>
              </div>
              <div class="panel tree">
                <div class="head"><div>Etiketler &amp; öznitelikleri</div><div>Açıklama</div></div>
                <div class="row first">Uygulama</div>
                <div class="row">
                  <svg class="tree-line" width="20" height="18" viewBox="0 0 20 18"><path d="M3 7 7 10 11 7M7 3V9M10 9H18" fill="none" stroke="#c4c4c4"/></svg>
                  <svg class="ico" viewBox="0 0 16 16"><rect x="1.500" y="1.500" width="13" height="13" fill="#f4f4f4" stroke="#b0b0b0"/><circle cx="7" cy="10" r="4" fill="#2f6cb0"/><circle cx="11" cy="5" r="3.500" fill="#d0212c"/></svg>
                  <b>Curves_WB_SketchOnSurface_3</b>
                </div>
                <div class="row">
                  <svg class="tree-line" width="40" height="18" viewBox="0 0 40 18"><path d="M27 0V18M27 9H38" stroke="#c4c4c4"/></svg>
                  <svg class="ico" viewBox="0 0 16 16"><text x="0" y="15" font-family="Liberation Serif" font-style="italic" font-size="22" fill="#f5f5f5" stroke="#b4b4b4" stroke-width=".5">S</text></svg>
                  ShapeString
                </div>
                <div class="row">
                  <svg class="tree-line" width="40" height="18" viewBox="0 0 40 18"><path d="M27 0V5M31 9H38" stroke="#c4c4c4"/><path d="M24 5 28 9 24 13" fill="none" stroke="#888" stroke-width="1.400"/></svg>
                  <svg class="ico" viewBox="0 0 16 16">${ICONS.cut}</svg>
                  Cut
                </div>
              </div>
              <div class="hsplit"><div></div></div>
              <div class="panel props">
                <div class="head"><div>Özellik</div><div>Değer</div></div>
                <div class="group">Baz</div>
                <div class="prow">
                  <div class="gut"><svg viewBox="0 0 20 20"><path d="M7 6 10 10 7 14" fill="none" stroke="#888" stroke-width="1.500"/><path d="M10 0V6M10 14V20M12 10H20" stroke="#c0c0c0"/></svg></div>
                  <div class="name">Placement</div>
                  <div class="val">[(0,00 0,00 1,00); 0,00 °; (0,0...</div>
                </div>
                <div class="prow">
                  <div class="gut none"><svg viewBox="0 0 20 20"><path d="M10 0V10H20" fill="none" stroke="#c0c0c0"/></svg></div>
                  <div class="name">Label</div>
                  <div class="val">Offset</div>
                </div>
              </div>
              <div class="tabs-bot">
                <div class="tab">Görünüm</div>
                <div class="tab on">Veri</div>
              </div>
            </div>
            <div class="vsplit"><div></div></div>
          </div>
          <div class="viewcol">
            <svg class="view" viewBox="373 131 697 567">
              <defs>
                <linearGradient id="gbg" x2="0" y2="1">
                  <stop offset="0" stop-color="#333366"/><stop offset=".3" stop-color="#56567f"/>
                  <stop offset=".47" stop-color="#66668b"/><stop offset=".9" stop-color="#8d8da5"/><stop offset="1" stop-color="#9898aa"/>
                </linearGradient>
                <linearGradient id="gwall" gradientUnits="userSpaceOnUse" x1="507" y1="0" x2="920" y2="0">
                  <stop offset="0" stop-color="#8998a8"/><stop offset=".15" stop-color="#8a97a5"/><stop offset=".27" stop-color="#727c88"/>
                  <stop offset=".38" stop-color="#4c525b"/><stop offset=".5" stop-color="#3e434b"/><stop offset=".62" stop-color="#4d545d"/>
                  <stop offset=".8" stop-color="#7a8591"/><stop offset="1" stop-color="#8898a6"/>
                </linearGradient>
                <linearGradient id="ggold" gradientUnits="userSpaceOnUse" x1="565" y1="0" x2="848" y2="0">
                  <stop offset="0" stop-color="#d9aa22"/><stop offset=".2" stop-color="#b08a1c"/><stop offset=".42" stop-color="#6b5216"/>
                  <stop offset=".52" stop-color="#5a4514"/><stop offset=".72" stop-color="#856a1a"/><stop offset="1" stop-color="#c8a024"/>
                </linearGradient>
                <linearGradient id="grim" gradientUnits="userSpaceOnUse" x1="562" y1="0" x2="848" y2="0">
                  <stop offset="0" stop-color="#8a6d16"/><stop offset=".06" stop-color="#c79f20"/><stop offset=".4" stop-color="#a58418"/>
                  <stop offset=".65" stop-color="#b8951f"/><stop offset=".8" stop-color="#a38017"/><stop offset="1" stop-color="#5e4a12"/>
                </linearGradient>
              </defs>
              <rect x="373" y="131" width="697" height="567" fill="url(#gbg)"/>
              ${this.renderModel()}
              ${this.renderCube()}
              ${this.renderTriad()}
            </svg>
            <div class="doctabs">
              <div class="doctab">
                <svg class="f" viewBox="0 0 17 17"><path d="M1 1H10V4H5V7H9V10H5V16H1Z" fill="#d0212c" stroke="#8a1118" stroke-width=".5"/><circle cx="11.500" cy="11.500" r="3.500" fill="#3a6ea8" stroke="#22486f" stroke-dasharray="1.500 1" stroke-width="2"/><circle cx="11.500" cy="11.500" r="1" fill="#f5f5f5"/></svg>
                <span>Curves_WB_SketchOnSurface_3 : 1*</span>
                <svg class="x" viewBox="0 0 12 12"><path d="M1 1 11 11M11 1 1 11" stroke="#999" stroke-width="1.600"/></svg>
              </div>
            </div>
          </div>
        </div>
        <div class="status">
          <div class="msg">Preselected: Curves_WB_SketchOnSurface_3.Offset.Edge3 (-44.069641 mm, 4.535784 mm, 0.000000 mm)</div>
          <div class="nav"><svg viewBox="0 0 12 14"><rect x="1.500" y="1" width="9" height="12" rx="4" fill="none" stroke="#444" stroke-width="1.500"/><path d="M6 1V6M1.500 6H10.500" stroke="#444" stroke-width="1.200"/></svg>Blender</div>
          <div class="dims">113,64 mm x 92,45 mm</div>
        </div>
      </div>
    `;
  }
}
